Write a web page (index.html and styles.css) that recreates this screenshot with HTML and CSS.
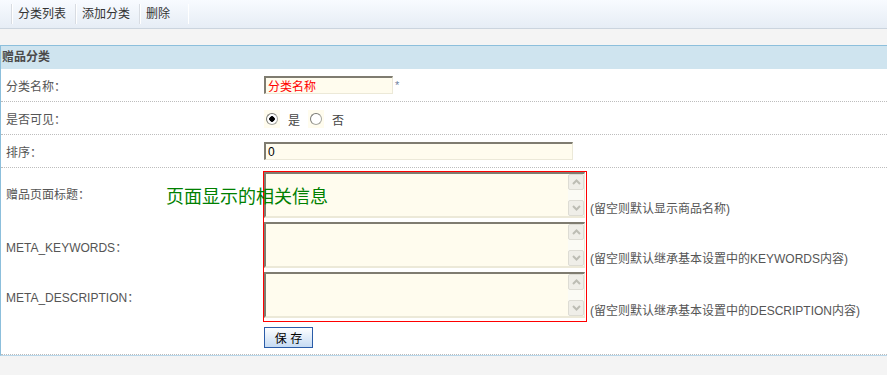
FILE: index.html
```html
<!DOCTYPE html>
<html lang="zh-CN">
<head>
    <meta charset="UTF-8">
    <title>赠品分类</title>
    <link rel="stylesheet" href="styles.css">
</head>
<body>
    <div class="topnav">
        <a href="#">分类列表</a>
        <a href="#">添加分类</a>
        <a href="#" class="last">删除</a>
    </div>

    <div class="panel">
        <div class="panel-title">赠品分类</div>

        <div class="row">
            <label>分类名称：</label>
            <div class="field">
                <input type="text" class="txt txt-short" value="分类名称"><span class="req">*</span>
            </div>
        </div>

        <div class="row">
            <label>是否可见：</label>
            <div class="field">
                <span class="radio-box"><input type="radio" name="visible" checked></span>
                <span class="opt">是</span>
                <span class="radio-box"><input type="radio" name="visible"></span>
                <span class="opt">否</span>
            </div>
        </div>

        <div class="row">
            <label>排序：</label>
            <div class="field">
                <input type="text" class="txt txt-long" value="0">
            </div>
        </div>

        <div class="meta">
            <span class="note">页面显示的相关信息</span>

            <label class="l1">赠品页面标题：</label>
            <label class="l2">META_KEYWORDS：</label>
            <label class="l3">META_DESCRIPTION：</label>

            <div class="red-box">
                <div class="ta-wrap">
                    <textarea></textarea>
                    <div class="sbar">
                        <span class="sbtn"><svg width="9" height="6" viewBox="0 0 9 6"><path d="M1 5 L4.5 1.5 L8 5" fill="none" stroke="#bdbdb4" stroke-width="2"/></svg></span>
                        <span class="sbtn"><svg width="9" height="6" viewBox="0 0 9 6"><path d="M1 1 L4.5 4.5 L8 1" fill="none" stroke="#bdbdb4" stroke-width="2"/></svg></span>
                    </div>
                </div>
                <div class="ta-wrap">
                    <textarea></textarea>
                    <div class="sbar">
                        <span class="sbtn"><svg width="9" height="6" viewBox="0 0 9 6"><path d="M1 5 L4.5 1.5 L8 5" fill="none" stroke="#bdbdb4" stroke-width="2"/></svg></span>
                        <span class="sbtn"><svg width="9" height="6" viewBox="0 0 9 6"><path d="M1 1 L4.5 4.5 L8 1" fill="none" stroke="#bdbdb4" stroke-width="2"/></svg></span>
                    </div>
                </div>
                <div class="ta-wrap">
                    <textarea></textarea>
                    <div class="sbar">
                        <span class="sbtn"><svg width="9" height="6" viewBox="0 0 9 6"><path d="M1 5 L4.5 1.5 L8 5" fill="none" stroke="#bdbdb4" stroke-width="2"/></svg></span>
                        <span class="sbtn"><svg width="9" height="6" viewBox="0 0 9 6"><path d="M1 1 L4.5 4.5 L8 1" fill="none" stroke="#bdbdb4" stroke-width="2"/></svg></span>
                    </div>
                </div>
            </div>

            <span class="hint h1">(留空则默认显示商品名称)</span>
            <span class="hint h2">(留空则默认继承基本设置中的KEYWORDS内容)</span>
            <span class="hint h3">(留空则默认继承基本设置中的DESCRIPTION内容)</span>
        </div>

        <div class="actions">
            <button type="button" class="btn-save">保 存</button>
        </div>
    </div>
</body>
</html>
```

FILE: styles.css
```css
body {
    margin: 0;
    background-color: #f4f4f4;
    font-family: "Liberation Sans", "Noto Sans CJK SC", sans-serif;
    font-size: 12px;
    color: #555;
}
.topnav {
    height: 28px;
    display: flex;
    align-items: center;
    padding-left: 11px;
    background: linear-gradient(#f8fbff, #e6edf5);
    border-bottom: 1px solid #cbd4de;
}
.topnav a {
    color: #333;
    text-decoration: none;
    line-height: 20px;
    padding: 0 9px 0 6px;
    border-left: 1px solid #d8dce2;
    box-shadow: inset 1px 0 0 #fff;
}
.topnav a.last {
    padding-right: 18px;
    border-right: 1px solid #fff;
}
.panel {
    margin-top: 16px;
    background: white;
    border-top: 1px solid #8cbfdc;
    border-left: 1px solid #8cbfdc;
    border-bottom: 1px solid #b9d7ea;
}
.panel-title {
    height: 23px;
    line-height: 23px;
    padding-left: 1px;
    background-color: #cfe4ef;
    font-weight: bold;
    color: #4a4a4a;
}
.row {
    display: grid;
    grid-template-columns: 263px 1fr;
    align-items: center;
    height: 32px;
    border-bottom: 1px dotted #bdbdbd;
}
.row label {
    padding-left: 5px;
}
.field {
    display: flex;
    align-items: center;
}
.txt {
    box-sizing: border-box;
    height: 18px;
    padding: 0 2px;
    margin: 0;
    background-color: #fffcee;
    border-top: 2px solid #7f7c70;
    border-left: 2px solid #7f7c70;
    border-right: 1px solid #ece9d8;
    border-bottom: 1px solid #ece9d8;
    font-family: inherit;
    font-size: 12px;
    outline: none;
}
.txt-short {
    width: 129px;
    color: red;
}
.txt-long {
    width: 309px;
    color: #000;
}
.req {
    color: #6f82a0;
    margin-left: 2px;
    font-size: 11px;
}
.radio-box {
    display: inline-flex;
    align-items: center;
    justify-content: center;
    width: 16px;
    height: 18px;
    margin-top: 2px;
    background-color: #fffcee;
}
.radio-box input {
    appearance: none;
    margin: 0;
    width: 12px;
    height: 12px;
    border-radius: 50%;
    border: 1px solid #a8a8a0;
    border-left-color: #7a7a74;
    border-top-color: #7a7a74;
    background: white;
}
.radio-box input:checked {
    background: radial-gradient(circle, #000 2.5px, white 3px);
}
.opt {
    margin: 2px 8px 0 8px;
    color: #444;
}
.meta {
    position: relative;
    display: grid;
    grid-template-columns: 262px 324px auto;
    grid-template-rows: 50px 50px 50px;
    padding-top: 3px;
}
.meta label {
    grid-column: 1;
    align-self: center;
    padding-left: 5px;
}
.l1 { grid-row: 1; margin-top: -6px; }
.l2 { grid-row: 2; }
.l3 { grid-row: 3; }
.note {
    position: absolute;
    left: 165px;
    top: 17px;
    line-height: 24px;
    font-size: 18px;
    color: #008000;
}
.red-box {
    grid-column: 2;
    grid-row: 1 / 4;
    align-self: start;
    display: flex;
    flex-direction: column;
    gap: 4px;
    padding: 0 1px 3px 0;
    border: 1px solid red;
}
.ta-wrap {
    box-sizing: border-box;
    display: flex;
    width: 321px;
    height: 46px;
    background-color: #fffcee;
    border-top: 2px solid #7f7c70;
    border-left: 2px solid #7f7c70;
    border-right: 1px solid #ece9d8;
    border-bottom: 2px solid #ece9d8;
}
.ta-wrap textarea {
    flex: 1;
    border: none;
    background: transparent;
    resize: none;
    outline: none;
    overflow: hidden;
}
.sbar {
    width: 16px;
    display: flex;
    flex-direction: column;
    justify-content: space-between;
    background-color: #fbfbf5;
}
.sbtn {
    box-sizing: border-box;
    height: 16px;
    display: flex;
    align-items: center;
    justify-content: center;
    background-color: #efeee8;
    border: 1px solid #dddcd4;
    border-radius: 2px;
}
.hint {
    grid-column: 3;
    align-self: end;
    margin: 0 0 5px 3px;
    white-space: nowrap;
}
.h1 { grid-row: 1; }
.h2 { grid-row: 2; }
.h3 { grid-row: 3; margin-bottom: 3px; }
.actions {
    padding: 6px 0 6px 263px;
    border-bottom: 1px dotted #bdbdbd;
}
.btn-save {
    display: block;
    width: 49px;
    height: 21px;
    padding: 0;
    border: 1px solid #2a5ca8;
    background: linear-gradient(#fdfeff, #c6dbf3);
    font-family: inherit;
    font-size: 12px;
    color: #000;
    cursor: pointer;
}
```
